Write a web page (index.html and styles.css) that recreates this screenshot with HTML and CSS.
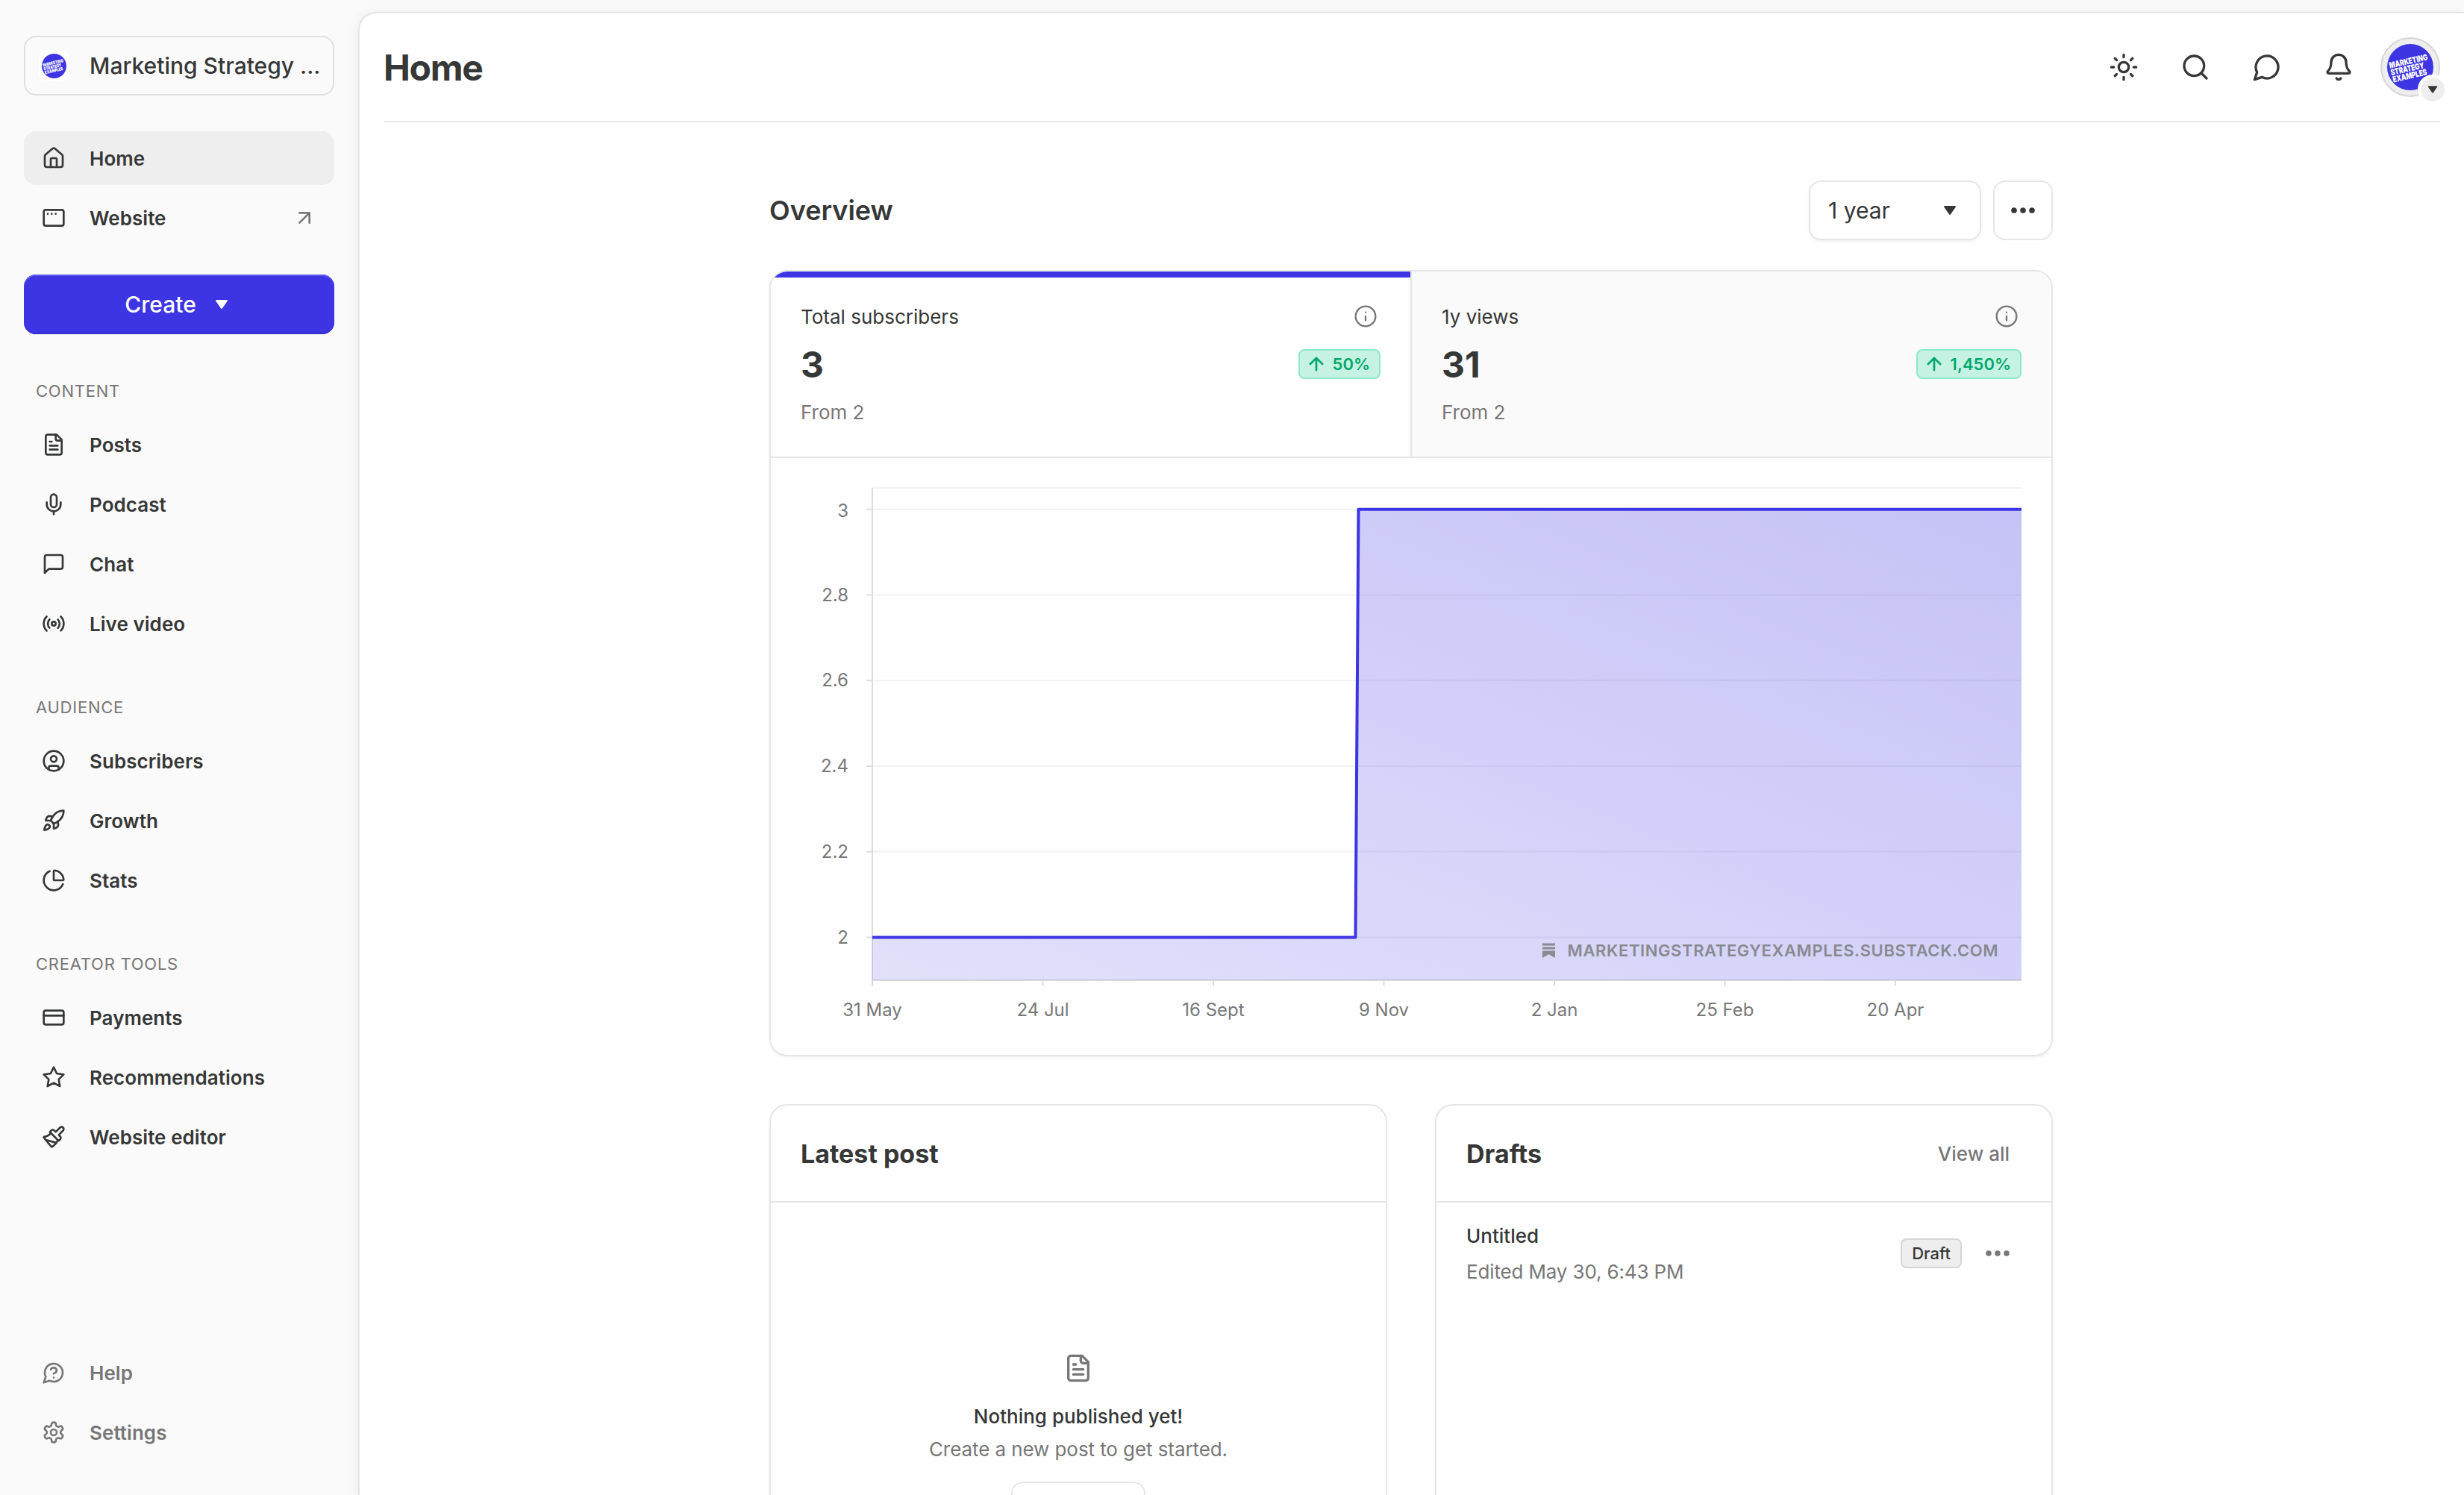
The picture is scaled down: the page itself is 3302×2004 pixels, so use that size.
FILE: index.html
```html
<!DOCTYPE html>
<html lang="en">
<head>
  <meta charset="UTF-8">
  <title>Home - Marketing Strategy Examples</title>
  <meta name="viewport" content="width=device-width, initial-scale=1.0" />
  <link rel="stylesheet" href="styles.css">
</head>
<body>
  <aside class="sidebar">
    <a class="publication" href="#">
      <span class="pub-logo">
        <svg viewBox="0 0 64 64"><circle cx="32" cy="32" r="32" fill="#3d34e3"/><g class="logo-text" transform="rotate(-13 32 32)"><text x="31.300" y="27.500" textLength="54" lengthAdjust="spacingAndGlyphs">MARKETING</text><text x="27.500" y="37.500" textLength="47" lengthAdjust="spacingAndGlyphs">STRATEGY</text><text x="28.700" y="47.500" textLength="48" lengthAdjust="spacingAndGlyphs">EXAMPLES</text></g></svg>
      </span>
      <span class="pub-name">Marketing Strategy ...</span>
    </a>

    <nav class="nav-main">
      <a class="nav-item active" href="#"><svg class="icon" viewBox="0 0 24 24"><path d="M15 21v-8a1 1 0 0 0-1-1h-4a1 1 0 0 0-1 1v8"/><path d="M3 10a2 2 0 0 1 .709-1.528l7-5.999a2 2 0 0 1 2.582 0l7 5.999A2 2 0 0 1 21 10v9a2 2 0 0 1-2 2H5a2 2 0 0 1-2-2z"/></svg><span>Home</span></a>
      <a class="nav-item" href="#"><svg class="icon" viewBox="0 0 24 24"><rect x="2" y="4" width="20" height="16" rx="2"/><path d="M6 8h.01M10 8h.01M14 8h.01"/></svg><span>Website</span><svg class="icon external" viewBox="0 0 24 24"><path d="M7 7h10v10M7 17 17 7"/></svg></a>
    </nav>

    <a class="btn-create" href="#"><span>Create</span><svg class="caret" viewBox="0 0 32 32"><path d="M9 11h14l-7 10z"/></svg></a>

    <h4 class="nav-label">CONTENT</h4>
    <nav class="nav-group">
      <a class="nav-item" href="#"><svg class="icon" viewBox="0 0 24 24"><path d="M15 2H6a2 2 0 0 0-2 2v16a2 2 0 0 0 2 2h12a2 2 0 0 0 2-2V7Z"/><path d="M14 2v4a2 2 0 0 0 2 2h4M10 9H8M16 13H8M16 17H8"/></svg><span>Posts</span></a>
      <a class="nav-item" href="#"><svg class="icon" viewBox="0 0 24 24"><path d="M12 19v3M19 10v2a7 7 0 0 1-14 0v-2"/><rect x="9" y="2" width="6" height="13" rx="3"/></svg><span>Podcast</span></a>
      <a class="nav-item" href="#"><svg class="icon" viewBox="0 0 24 24"><path d="M21 15a2 2 0 0 1-2 2H7l-4 4V5a2 2 0 0 1 2-2h14a2 2 0 0 1 2 2z"/></svg><span>Chat</span></a>
      <a class="nav-item" href="#"><svg class="icon" viewBox="0 0 24 24"><path d="M4.9 19.1C1 15.2 1 8.8 4.9 4.9M7.8 16.2c-2.3-2.3-2.3-6.1 0-8.5M16.2 7.8c2.3 2.3 2.3 6.1 0 8.5M19.1 4.9C23 8.8 23 15.1 19.1 19"/><circle cx="12" cy="12" r="2"/></svg><span>Live video</span></a>
    </nav>

    <h4 class="nav-label">AUDIENCE</h4>
    <nav class="nav-group">
      <a class="nav-item" href="#"><svg class="icon" viewBox="0 0 24 24"><circle cx="12" cy="12" r="10"/><circle cx="12" cy="10" r="3"/><path d="M7 20.662V19a2 2 0 0 1 2-2h6a2 2 0 0 1 2 2v1.662"/></svg><span>Subscribers</span></a>
      <a class="nav-item" href="#"><svg class="icon" viewBox="0 0 24 24"><path d="M4.5 16.5c-1.5 1.26-2 5-2 5s3.74-.5 5-2c.71-.84.7-2.13-.09-2.91a2.18 2.18 0 0 0-2.91-.09z"/><path d="m12 15-3-3a22 22 0 0 1 2-3.95A12.88 12.88 0 0 1 22 2c0 2.72-.78 7.5-6 11a22.35 22.35 0 0 1-4 2z"/><path d="M9 12H4s.55-3.03 2-4c1.62-1.08 5 0 5 0M12 15v5s3.03-.55 4-2c1.08-1.62 0-5 0-5"/></svg><span>Growth</span></a>
      <a class="nav-item" href="#"><svg class="icon" viewBox="0 0 24 24"><path d="M21 12c.552 0 1.005-.449.95-.998a10 10 0 0 0-8.953-8.951c-.55-.055-.998.398-.998.95v8a1 1 0 0 0 1 1z"/><path d="M21.21 15.89A10 10 0 1 1 8 2.83"/></svg><span>Stats</span></a>
    </nav>

    <h4 class="nav-label">CREATOR TOOLS</h4>
    <nav class="nav-group">
      <a class="nav-item" href="#"><svg class="icon" viewBox="0 0 24 24"><rect x="2" y="5" width="20" height="14" rx="2"/><path d="M2 10h20"/></svg><span>Payments</span></a>
      <a class="nav-item" href="#"><svg class="icon" viewBox="0 0 24 24"><path d="M12 2l3.09 6.26L22 9.27l-5 4.87 1.18 6.88L12 17.77l-6.18 3.25L7 14.14 2 9.27l6.91-1.01z"/></svg><span>Recommendations</span></a>
      <a class="nav-item" href="#"><svg class="icon" viewBox="0 0 24 24"><path d="m14.622 17.897-10.68-2.913"/><path d="M18.376 2.622a1 1 0 1 1 3.002 3.002L17.36 9.643a.5.5 0 0 0 0 .707l.944.944a2.41 2.41 0 0 1 0 3.408l-.944.944a.5.5 0 0 1-.707 0L8.354 7.348a.5.5 0 0 1 0-.707l.944-.944a2.41 2.41 0 0 1 3.408 0l.944.944a.5.5 0 0 0 .707 0z"/><path d="M9 8c-1.804 2.71-3.97 3.46-6.583 3.948a.507.507 0 0 0-.302.819l7.32 8.883a1 1 0 0 0 1.185.204C12.735 20.405 16 16.792 16 15"/></svg><span>Website editor</span></a>
    </nav>

    <nav class="nav-footer">
      <a class="nav-item" href="#"><svg class="icon" viewBox="0 0 24 24"><path d="M7.9 20A9 9 0 1 0 4 16.1L2 22Z"/><path d="M9.09 9a3 3 0 0 1 5.83 1c0 2-3 3-3 3M12 17h.01"/></svg><span>Help</span></a>
      <a class="nav-item" href="#"><svg class="icon" viewBox="0 0 24 24"><path d="M12.22 2h-.44a2 2 0 0 0-2 2v.18a2 2 0 0 1-1 1.73l-.43.25a2 2 0 0 1-2 0l-.15-.08a2 2 0 0 0-2.73.73l-.22.38a2 2 0 0 0 .73 2.73l.15.1a2 2 0 0 1 1 1.72v.51a2 2 0 0 1-1 1.74l-.15.09a2 2 0 0 0-.73 2.73l.22.38a2 2 0 0 0 2.73.73l.15-.08a2 2 0 0 1 2 0l.43.25a2 2 0 0 1 1 1.73V20a2 2 0 0 0 2 2h.44a2 2 0 0 0 2-2v-.18a2 2 0 0 1 1-1.73l.43-.25a2 2 0 0 1 2 0l.15.08a2 2 0 0 0 2.73-.73l.22-.39a2 2 0 0 0-.73-2.73l-.15-.08a2 2 0 0 1-1-1.74v-.5a2 2 0 0 1 1-1.74l.15-.09a2 2 0 0 0 .73-2.73l-.22-.38a2 2 0 0 0-2.73-.73l-.15.08a2 2 0 0 1-2 0l-.43-.25a2 2 0 0 1-1-1.73V4a2 2 0 0 0-2-2z"/><circle cx="12" cy="12" r="3"/></svg><span>Settings</span></a>
    </nav>
  </aside>

  <main class="main">
    <header class="topbar">
      <h1>Home</h1>
      <div class="topbar-actions">
        <svg class="icon" viewBox="0 0 24 24"><circle cx="12" cy="12" r="4"/><path d="M12 2v2M12 20v2M4.93 4.93l1.41 1.41M17.66 17.66l1.41 1.41M2 12h2M20 12h2M6.34 17.66l-1.41 1.41M19.07 4.93l-1.41 1.41"/></svg>
        <svg class="icon" viewBox="0 0 24 24"><circle cx="11" cy="11" r="8"/><path d="m21 21-4.3-4.3"/></svg>
        <svg class="icon" viewBox="0 0 24 24"><path d="M7.9 20A9 9 0 1 0 4 16.1L2 22Z"/></svg>
        <svg class="icon" viewBox="0 0 24 24"><path d="M10.268 21a2 2 0 0 0 3.464 0"/><path d="M3.262 15.326A1 1 0 0 0 4 17h16a1 1 0 0 0 .74-1.673C19.41 13.956 18 12.499 18 8A6 6 0 0 0 6 8c0 4.499-1.411 5.956-2.738 7.326"/></svg>
        <div class="avatar">
          <svg viewBox="0 0 64 64"><circle cx="32" cy="32" r="32" fill="#3d34e3"/><g class="logo-text" transform="rotate(-13 32 32)"><text x="31.300" y="27.500" textLength="54" lengthAdjust="spacingAndGlyphs">MARKETING</text><text x="27.500" y="37.500" textLength="47" lengthAdjust="spacingAndGlyphs">STRATEGY</text><text x="28.700" y="47.500" textLength="48" lengthAdjust="spacingAndGlyphs">EXAMPLES</text></g></svg>
          <span class="avatar-caret"><svg viewBox="0 0 32 32"><path d="M10.500 12h11l-5.500 8z"/></svg></span>
        </div>
      </div>
    </header>

    <div class="content">
      <div class="overview-head">
        <h2>Overview</h2>
        <div class="select"><span>1 year</span><svg class="caret" viewBox="0 0 32 32"><path d="M9 11h14l-7 10z"/></svg></div>
        <div class="btn-more"><svg class="dots" viewBox="0 0 32 32"><circle cx="4" cy="16" r="3.8"/><circle cx="16" cy="16" r="3.8"/><circle cx="28" cy="16" r="3.8"/></svg></div>
      </div>

      <section class="card">
        <div class="tabs">
          <div class="tab selected">
            <div class="tab-row"><span class="tab-title">Total subscribers</span><svg class="icon info" viewBox="0 0 24 24"><circle cx="12" cy="12" r="10"/><path d="M12 16v-4M12 8h.01"/></svg></div>
            <div class="tab-row"><span class="tab-value">3</span><span class="delta"><svg class="icon" viewBox="0 0 24 24"><path d="m5 12 7-7 7 7M12 19V5"/></svg><span>50%</span></span></div>
            <div class="tab-row"><span class="tab-from">From 2</span></div>
          </div>
          <div class="tab">
            <div class="tab-row"><span class="tab-title">1y views</span><svg class="icon info" viewBox="0 0 24 24"><circle cx="12" cy="12" r="10"/><path d="M12 16v-4M12 8h.01"/></svg></div>
            <div class="tab-row"><span class="tab-value">31</span><span class="delta"><svg class="icon" viewBox="0 0 24 24"><path d="m5 12 7-7 7 7M12 19V5"/></svg><span>1,450%</span></span></div>
            <div class="tab-row"><span class="tab-from">From 2</span></div>
          </div>
        </div>

        <svg class="chart" viewBox="0 0 1716 800">
          <defs>
            <linearGradient id="area" x1="1" y1="0" x2="0" y2="1">
              <stop offset="0" stop-color="#3d34e3" stop-opacity="0.3"/>
              <stop offset="1" stop-color="#3d34e3" stop-opacity="0.15"/>
            </linearGradient>
          </defs>
          <g class="grid">
            <path d="M136 40H1676M136 68.7H1676M136 183.5H1676M136 298.3H1676M136 413H1676M136 527.8H1676M136 642.6H1676"/>
          </g>
          <g class="axis">
            <path d="M136 40V708M136 700H1676M128 68.7h8M128 183.5h8M128 298.3h8M128 413h8M128 527.8h8M128 642.6h8"/>
            <path d="M364.5 700v8M593 700v8M821.5 700v8M1050 700v8M1278.5 700v8M1507 700v8"/>
          </g>
          <path fill="url(#area)" d="M136 642.6H783.5L787.5 68.7H1676V700H136z"/>
          <path class="line" d="M136 642.6H783.5L787.5 68.7H1676"/>
          <g class="y-labels">
            <text x="104" y="78.7">3</text>
            <text x="104" y="191.5">2.8</text>
            <text x="104" y="306.3">2.6</text>
            <text x="104" y="421">2.4</text>
            <text x="104" y="535.8">2.2</text>
            <text x="104" y="650.6">2</text>
          </g>
          <g class="x-labels">
            <text x="136" y="748">31 May</text>
            <text x="364.5" y="748">24 Jul</text>
            <text x="593" y="748">16 Sept</text>
            <text x="821.5" y="748">9 Nov</text>
            <text x="1050" y="748">2 Jan</text>
            <text x="1278.5" y="748">25 Feb</text>
            <text x="1507" y="748">20 Apr</text>
          </g>
          <g class="watermark">
            <path d="M1034 650.5h17v3h-17zM1034 655.5h17v3h-17zM1034 660.5h17V670l-8.500-4.700-8.500 4.700z"/>
            <text x="1067.500" y="668" textLength="577">MARKETINGSTRATEGYEXAMPLES.SUBSTACK.COM</text>
          </g>
        </svg>
      </section>

      <div class="card-row">
        <section class="card">
          <div class="card-head"><h3>Latest post</h3></div>
          <div class="empty">
            <svg class="icon" viewBox="0 0 24 24"><path d="M15 2H6a2 2 0 0 0-2 2v16a2 2 0 0 0 2 2h12a2 2 0 0 0 2-2V7Z"/><path d="M14 2v4a2 2 0 0 0 2 2h4M10 9H8M16 13H8M16 17H8"/></svg>
            <p class="empty-title">Nothing published yet!</p>
            <p class="empty-text">Create a new post to get started.</p>
            <div class="btn-outline"></div>
          </div>
        </section>

        <section class="card">
          <div class="card-head"><h3>Drafts</h3><a class="view-all" href="#">View all</a></div>
          <div class="draft">
            <div class="draft-info">
              <p class="draft-title">Untitled</p>
              <p class="draft-date">Edited May 30, 6:43 PM</p>
            </div>
            <span class="tag">Draft</span>
            <svg class="dots" viewBox="0 0 32 32"><circle cx="4" cy="16" r="3.8"/><circle cx="16" cy="16" r="3.8"/><circle cx="28" cy="16" r="3.8"/></svg>
          </div>
        </section>
      </div>
    </div>
  </main>
</body>
</html>
```
FILE: styles.css
```css
* {
  box-sizing: border-box;
}

body {
  margin: 0;
  height: 2004px;
  overflow: hidden;
  display: flex;
  background: #fafafa;
  color: #363737;
  font-family: Inter, sans-serif;
  font-size: 26px;
  line-height: 40px;
}

h1, h2, h3, h4, p {
  margin: 0;
}

a {
  color: inherit;
  text-decoration: none;
}

svg {
  display: block;
  flex-shrink: 0;
  overflow: visible;
}

.icon {
  width: 32px;
  height: 32px;
  fill: none;
  stroke: currentColor;
  stroke-width: 2;
  stroke-linecap: round;
  stroke-linejoin: round;
}

.caret {
  width: 32px;
  height: 32px;
  fill: currentColor;
  stroke: currentColor;
  stroke-width: 2;
  stroke-linejoin: round;
}

.dots {
  width: 32px;
  height: 32px;
  fill: currentColor;
}

/* sidebar */

.sidebar {
  width: 482px;
  flex-shrink: 0;
  padding: 48px 34px 48px 32px;
  display: flex;
  flex-direction: column;
}

.publication {
  height: 80px;
  border: 2px solid #e0e0e0;
  border-radius: 16px;
  display: flex;
  align-items: center;
  gap: 28px;
  padding-left: 18px;
  font-size: 30px;
  font-weight: 500;
  white-space: nowrap;
}

.pub-logo {
  width: 40px;
  height: 40px;
  border-radius: 8px;
  background: #fff;
  display: flex;
  align-items: center;
  justify-content: center;
}

.pub-logo svg {
  width: 33px;
  height: 33px;
}

.logo-text {
  fill: #fff;
  font-size: 11.5px;
  font-weight: 900;
  text-anchor: middle;
}

.nav-main {
  margin-top: 48px;
}

.nav-main, .nav-group, .nav-footer {
  display: flex;
  flex-direction: column;
  gap: 8px;
}

.nav-item {
  height: 72px;
  border-radius: 16px;
  display: flex;
  align-items: center;
  gap: 32px;
  padding: 0 24px;
  font-weight: 600;
  letter-spacing: 0.05px;
}

.nav-item span {
  padding-top: 2px;
}

.nav-item.active {
  background: #eee;
}

.external {
  margin-left: auto;
  color: #777;
}

.btn-create {
  height: 80px;
  margin-top: 40px;
  border-radius: 16px;
  background: #3d34e3;
  box-shadow: inset 0 2px 0 #5f57ea, inset 0 -2px 0 #372fcc;
  color: #fff;
  display: flex;
  align-items: center;
  justify-content: center;
  gap: 18px;
  font-size: 30px;
  font-weight: 500;
}

.nav-label {
  height: 72px;
  margin-top: 40px;
  padding-left: 16px;
  line-height: 72px;
  font-size: 22px;
  font-weight: 400;
  letter-spacing: 0.75px;
  color: #777;
}

.nav-footer {
  margin-top: auto;
  color: #777;
}

/* main panel */

.main {
  flex: 1;
  margin-top: 18px;
  padding: 0 32px;
  background: #fff;
  border-radius: 22px 0 0 0;
  box-shadow: 0 0 0 2px #e6e6e6, 0 2px 16px rgba(0, 0, 0, 0.1);
  overflow: hidden;
}

.topbar {
  height: 146px;
  border-bottom: 2px solid #e6e6e6;
  display: flex;
  align-items: center;
  justify-content: space-between;
}

.topbar h1 {
  padding-top: 1px;
  font-size: 48px;
  font-weight: 700;
  letter-spacing: -1.3px;
  line-height: 60px;
}

.topbar-actions {
  display: flex;
  align-items: center;
  gap: 56px;
}

.topbar-actions .icon {
  width: 40px;
  height: 40px;
}

.avatar {
  position: relative;
  width: 80px;
  height: 80px;
  margin-left: -20px;
  border: 2px solid #d6d6d6;
  border-radius: 50%;
  background: #eee;
  display: flex;
  align-items: center;
  justify-content: center;
}

.avatar > svg {
  width: 62px;
  height: 62px;
}

.avatar-caret {
  position: absolute;
  right: -12px;
  bottom: -12px;
  width: 40px;
  height: 40px;
  border: 4px solid #fff;
  border-radius: 50%;
  background: #eee;
  display: flex;
  align-items: center;
  justify-content: center;
}

.avatar-caret svg {
  width: 32px;
  height: 32px;
  fill: #363737;
  stroke: #363737;
  stroke-width: 1.5;
  stroke-linejoin: round;
}

.content {
  width: 1720px;
  margin: 78px 0 0 517px;
}

.overview-head {
  height: 80px;
  display: flex;
  align-items: center;
  gap: 16px;
}

.overview-head h2 {
  font-size: 36px;
  font-weight: 600;
  margin-right: auto;
}

.select, .btn-more {
  height: 80px;
  border: 2px solid #e6e6e6;
  border-radius: 16px;
  display: flex;
  align-items: center;
}

.select {
  width: 231px;
  padding: 0 24px;
  justify-content: space-between;
  font-size: 30px;
  box-shadow: 0 2px 4px rgba(0, 0, 0, 0.06);
}

.btn-more {
  width: 80px;
  justify-content: center;
}

.card {
  border: 2px solid #e6e6e6;
  border-radius: 24px;
  background: #fff;
  box-shadow: 0 2px 4px rgba(0, 0, 0, 0.05);
  overflow: hidden;
}

.overview-head + .card {
  margin-top: 40px;
}

.tabs {
  display: grid;
  grid-template-columns: 857px 1fr;
  border-bottom: 2px solid #e6e6e6;
}

.tab {
  height: 248px;
  padding: 40px;
  background: #fafafa;
  border-left: 2px solid #e6e6e6;
  display: flex;
  flex-direction: column;
  gap: 24px;
}

.tab.selected {
  background: #fff;
  border-left: none;
  box-shadow: inset 0 8px 0 #3d34e3;
}

.tab-row {
  height: 40px;
  display: flex;
  align-items: center;
  justify-content: space-between;
}

.tab-title, .tab-from {
  padding-top: 2px;
}

.tab-value {
  padding-top: 2px;
  font-size: 48px;
  font-weight: 700;
}

.tab-from {
  color: #777;
}

.info {
  margin-right: 4px;
  color: #777;
  stroke-width: 1.8;
}

.delta {
  height: 40px;
  padding: 0 12px 0 8px;
  border: 2px solid #8fe8cb;
  border-radius: 8px;
  background: #c5f2e2;
  color: #00a86b;
  display: flex;
  align-items: center;
  gap: 8px;
  font-size: 22px;
  font-weight: 600;
}

.delta .icon {
  width: 28px;
  height: 28px;
  stroke-width: 2.3;
}

.chart {
  width: 1716px;
  height: 800px;
}

.chart text {
  font-size: 24px;
  fill: #777;
}

.grid path {
  stroke: #f2f2f2;
  stroke-width: 2;
}

.axis path {
  fill: none;
  stroke: #dcdcdc;
  stroke-width: 2;
}

.chart .line {
  fill: none;
  stroke: #3d34e3;
  stroke-width: 4;
  stroke-linejoin: round;
}

.y-labels {
  text-anchor: end;
}

.x-labels {
  text-anchor: middle;
}

.watermark {
  fill: #777;
  opacity: 0.8;
}

.chart .watermark text {
  font-size: 22px;
  font-weight: 600;
}

.card-row {
  display: grid;
  grid-template-columns: 1fr 1fr;
  gap: 64px;
  margin-top: 64px;
}

.card-row .card {
  height: 760px;
}

.card-head {
  height: 130px;
  padding: 0 40px;
  border-bottom: 2px solid #e6e6e6;
  display: flex;
  align-items: center;
  justify-content: space-between;
}

.card-head h3 {
  padding-top: 2px;
  font-size: 34px;
  font-weight: 700;
}

.view-all {
  padding: 2px 16px 0 0;
  font-weight: 500;
  color: #777;
}

.empty {
  padding-top: 202px;
  display: flex;
  flex-direction: column;
  align-items: center;
}

.empty .icon {
  width: 40px;
  height: 40px;
  color: #777;
}

.empty-title {
  margin-top: 25px;
  font-weight: 500;
}

.empty-text {
  margin-top: 4px;
  letter-spacing: -0.08px;
  color: #777;
}

.btn-outline {
  width: 180px;
  height: 80px;
  margin-top: 23px;
  border: 2px solid #e6e6e6;
  border-radius: 16px;
}

.draft {
  height: 136px;
  padding: 0 56px 0 40px;
  display: flex;
  align-items: center;
}

.draft-info {
  flex: 1;
  padding-top: 2px;
}

.draft-title {
  font-weight: 500;
}

.draft-date {
  margin-top: 8px;
  letter-spacing: -0.15px;
  color: #777;
}

.tag {
  height: 40px;
  padding: 0 13px;
  border: 2px solid #d6d6d6;
  border-radius: 8px;
  background: #eee;
  line-height: 36px;
  font-size: 22px;
  font-weight: 500;
}

.draft .dots {
  margin-left: 32px;
  color: #777;
}
```
